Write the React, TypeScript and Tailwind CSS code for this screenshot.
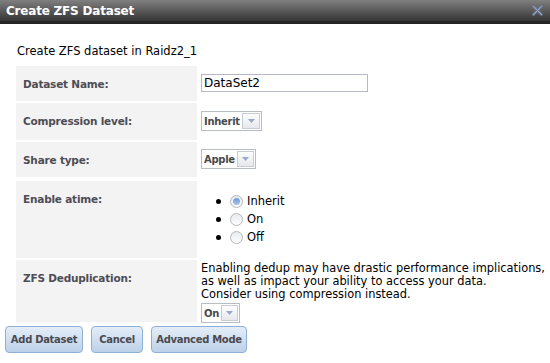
const font = { fontFamily: '"DejaVu Sans", Verdana, sans-serif' };

function Select({ value, width }: { value: string; width: string }) {
  return (
    <div className={`flex h-[20px] ${width} border border-[#b8bcc4] bg-white`}>
      <span className="flex flex-1 items-center px-[2px] text-[10px] font-bold tracking-[-0.3px] text-[#4a4a4a]">{value}</span>
      <span className="my-[1px] mr-[1px] flex w-[18px] items-center justify-center border border-[#c8ccd4] bg-gradient-to-b from-[#fdfdfd] to-[#e6e8ec]">
        <svg width="7" height="4" viewBox="0 0 7 4">
          <path d="M0 0 L7 0 L3.5 4 Z" fill="#9aa8c8" />
        </svg>
      </span>
    </div>
  );
}

function Radio({ checked }: { checked?: boolean }) {
  return (
    <span className="flex h-[13px] w-[13px] items-center justify-center rounded-full border border-[#b4b8be] bg-gradient-to-b from-[#e8eaee] to-[#fdfdfd]">
      {checked && <span className="h-[7px] w-[7px] rounded-full bg-gradient-to-b from-[#6f9bd6] to-[#a9c6ec]" />}
    </span>
  );
}

function Row({ label, h, children }: { label: string; h: string; children: React.ReactNode }) {
  return (
    <div className={`flex ${h}`}>
      <div className="w-[181px] shrink-0 bg-[#f3f3f3] px-[7px] pt-[12px] text-[10.5px] font-bold leading-[13px] tracking-[-0.2px] text-[#4d4d55]">
        {label}
      </div>
      <div className="flex-1 pl-[4px]">{children}</div>
    </div>
  );
}

function Btn({ children, w }: { children: React.ReactNode; w: string }) {
  return (
    <button className={`h-[27px] ${w} whitespace-nowrap rounded-[4px] border border-[#8eb0d6] bg-gradient-to-b from-[#e4edf8] to-[#bcd1e8] px-0 text-[10px] font-bold tracking-[-0.3px] text-[#4a4a50]`}>
      {children}
    </button>
  );
}

export default function App() {
  return (
    <div className="h-[363px] w-[550px] overflow-hidden bg-white text-black" style={font}>
      <div className="flex h-[24px] items-center justify-between border-b-[3px] border-[#262626] bg-gradient-to-b from-[#808080] to-[#363636] pl-[6px] pr-[7px]">
        <span className="text-[12px] font-bold tracking-[-0.2px] text-white">Create ZFS Dataset</span>
        <svg width="11" height="11" viewBox="0 0 11 11">
          <path d="M1.5 1.5 L9.5 9.5 M9.5 1.5 L1.5 9.5" stroke="#6d7d9c" strokeWidth="2.6" strokeLinecap="round" />
          <path d="M1.5 1.5 L9.5 9.5 M9.5 1.5 L1.5 9.5" stroke="#9aa6bd" strokeWidth="1" strokeLinecap="round" />
        </svg>
      </div>

      <div className="pl-[17px] pt-[21px] text-[11.5px] leading-[13px]">Create ZFS dataset in Raidz2_1</div>

      <div className="ml-[16px] mt-[8px] flex flex-col gap-[2px]">
        <Row label="Dataset Name:" h="h-[35px]">
          <div className="pt-[8px]">
            <div className="flex h-[18px] w-[167px] items-center border border-[#b5b9c4] px-[2px] text-[12px]">DataSet2</div>
          </div>
        </Row>
        <Row label="Compression level:" h="h-[37px]">
          <div className="pt-[8px]">
            <Select value="Inherit" width="w-[61px]" />
          </div>
        </Row>
        <Row label="Share type:" h="h-[35px]">
          <div className="pt-[7px]">
            <Select value="Apple" width="w-[55px]" />
          </div>
        </Row>
        <Row label="Enable atime:" h="h-[77px] mt-[2px]">
          <ul className="ml-[15px] flex flex-col gap-[5px] pt-[14px] text-[11.5px] leading-[13px]">
            {[
              ["Inherit", true],
              ["On", false],
              ["Off", false],
            ].map(([l, c]) => (
              <li key={l as string} className="flex items-center">
                <span className="h-[5px] w-[5px] rounded-full bg-black" />
                <span className="ml-[9px]">
                  <Radio checked={c as boolean} />
                </span>
                <span className="ml-[4px]">{l as string}</span>
              </li>
            ))}
          </ul>
        </Row>
        <Row label="ZFS Deduplication:" h="h-[62px]">
          <div className="pt-[2px] text-[11.4px] leading-[13px]">
            <p className="whitespace-nowrap">Enabling dedup may have drastic performance implications,</p>
            <p>as well as impact your ability to access your data.</p>
            <p>Consider using compression instead.</p>
            <div className="mt-[2px]">
              <Select value="On" width="w-[39px]" />
            </div>
          </div>
        </Row>
      </div>

      <div className="ml-[5px] mt-[4px] flex gap-[8px]">
        <Btn w="w-[78px]">Add Dataset</Btn>
        <Btn w="w-[52px]">Cancel</Btn>
        <Btn w="w-[96px]">Advanced Mode</Btn>
      </div>
    </div>
  );
}
